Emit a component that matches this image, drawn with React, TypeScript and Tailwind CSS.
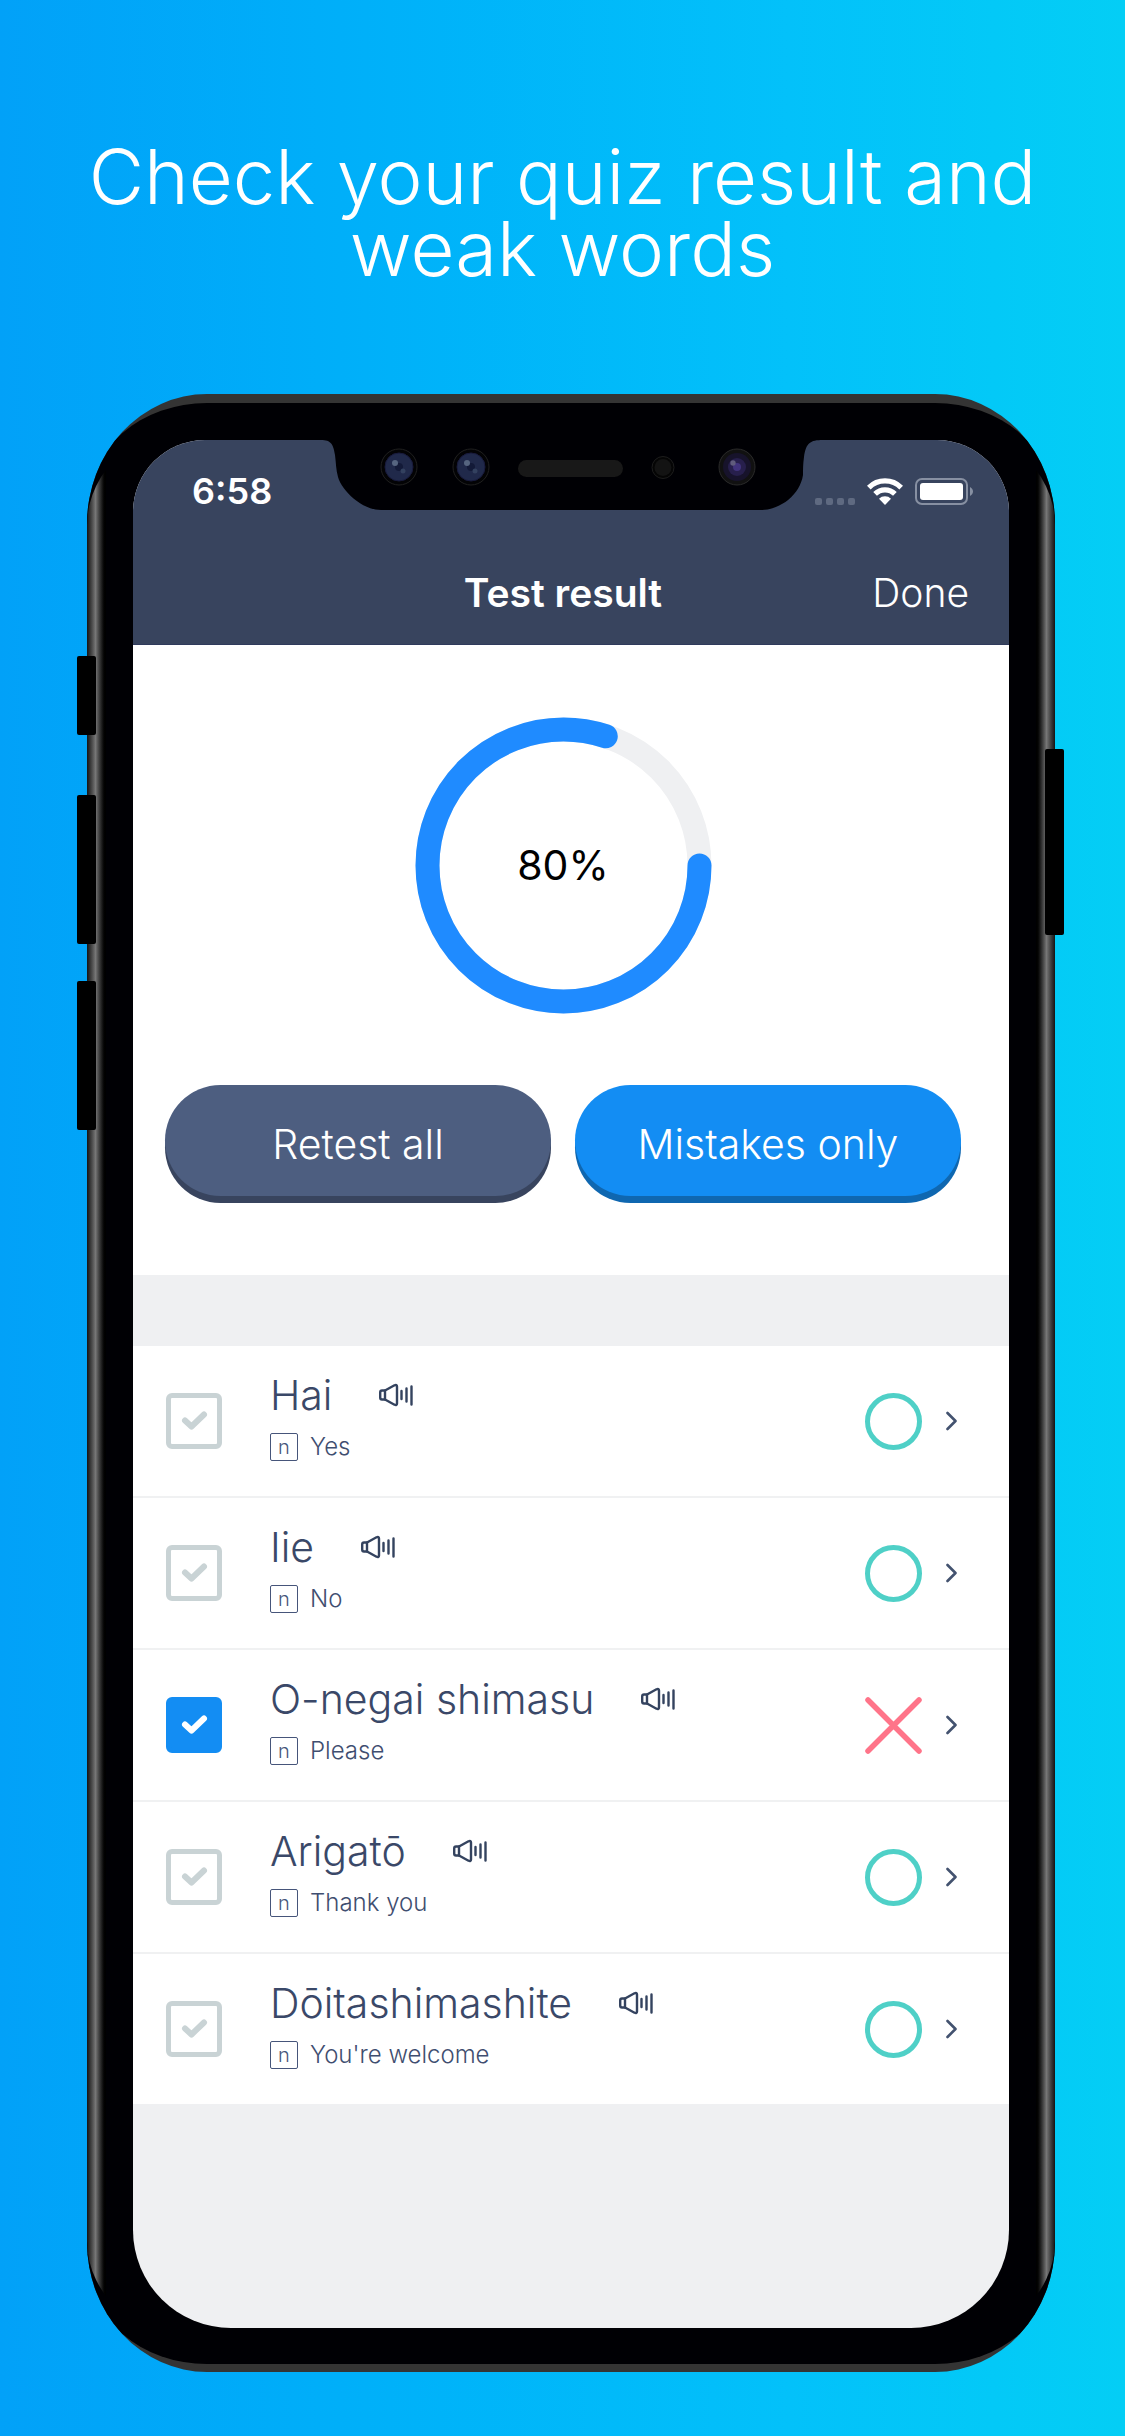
import { useState } from "react";

type Word = { name: string; meaning: string; correct: boolean };

const words: Word[] = [
  { name: "Hai", meaning: "Yes", correct: true },
  { name: "Iie", meaning: "No", correct: true },
  { name: "O-negai shimasu", meaning: "Please", correct: false },
  { name: "Arigatō", meaning: "Thank you", correct: true },
  { name: "Dōitashimashite", meaning: "You're welcome", correct: true },
];

function Notch() {
  return (
    <svg
      aria-hidden="true"
      viewBox="0 0 504 71"
      className="absolute -top-px left-1/2 h-[71px] w-[504px] -translate-x-1/2"
    >
      <path
        d="M0 0V1C11 1 14 3 16 16C17 24 17 31 19 38C23 52 43 71 62 71H442C461 71 481 56 484 36C484 30 484 25 485 18C487 4 491 1 504 1V0Z"
        fill="#000004"
      />
      {[80, 152].map((x) => (
        <g key={x}>
          <circle cx={x} cy="28" r="18" fill="#030305" stroke="#202020" />
          <circle cx={x} cy="28" r="14" fill="#20294a" stroke="#181a3c" />
          <circle cx={x} cy="28" r="4" fill="#131a38" />
          <circle cx={x - 4} cy="24" r="3" fill="#566580" />
          <circle cx={x + 4} cy="32" r="2.5" fill="#33415f" />
        </g>
      ))}
      <rect x="199" y="21" width="105" height="17" rx="8.5" fill="#181818" />
      <circle cx="344" cy="28.500" r="11" fill="#050505" stroke="#1d1d1d" />
      <circle cx="344" cy="28.500" r="8.500" fill="#131313" />
      <circle cx="418" cy="28" r="18" fill="#111" stroke="#2a2a2a" />
      <circle cx="418" cy="28" r="14" fill="#17132b" />
      <circle cx="418" cy="28" r="9" fill="#271f4c" />
      <circle cx="418" cy="28" r="4" fill="#41337c" />
      <circle cx="414" cy="24" r="2.700" fill="#605c7c" />
    </svg>
  );
}

function StatusIcons() {
  return (
    <div className="flex items-center gap-3" aria-hidden="true">
      <div className="flex gap-1 self-end">
        {[0, 1, 2, 3].map((i) => (
          <span key={i} className="size-[7px] rounded-[2px] bg-[#5f6a81]" />
        ))}
      </div>
      <svg viewBox="0 0 36 27" className="h-[27px] w-9">
        <g fill="none" stroke="#fff" strokeWidth="5.200">
          <path d="M1.800 9.600A22.800 22.800 0 0 1 34.200 9.600" />
          <path d="M8.100 15.900A14 14 0 0 1 27.900 15.900" />
        </g>
        <path d="M12 20.800A8.500 8.500 0 0 1 24 20.800L18 27Z" fill="#fff" />
      </svg>
      <svg viewBox="0 0 58 27" className="h-[27px] w-[58px]">
        <rect x="1" y="1" width="51" height="25" rx="6" fill="none" stroke="#8790a2" strokeWidth="2" />
        <rect x="5" y="5" width="43" height="17" rx="3" fill="#fff" />
        <path d="M55 9V18C59 16 59 11 55 9Z" fill="#8790a2" />
      </svg>
    </div>
  );
}

function ScoreRing({ percent }: { percent: number }) {
  const radius = 136;
  const length = 2 * Math.PI * radius;
  return (
    <div className="grid size-[297px] place-items-center">
      <svg viewBox="0 0 297 297" className="col-start-1 row-start-1 size-full" aria-hidden="true">
        <circle cx="148.500" cy="148.500" r={radius} fill="none" stroke="#eff0f2" strokeWidth="24" />
        <circle
          cx="148.500"
          cy="148.500"
          r={radius}
          fill="none"
          stroke="#1f8bff"
          strokeWidth="24"
          strokeLinecap="round"
          strokeDasharray={`${(length * percent) / 100} ${length}`}
        />
      </svg>
      <span className="col-start-1 row-start-1 text-[41px] text-black">{percent}%</span>
    </div>
  );
}

function SpeakerIcon() {
  return (
    <svg viewBox="0 0 34 24" className="h-6 w-[34px]" fill="none" stroke="#34435f" strokeWidth="2.400" strokeLinejoin="round" strokeLinecap="round" aria-hidden="true">
      <path d="M6 7.500L15.500 2.300Q18 1.500 18 3.500V20.500Q18 22.500 15.500 21.700L6 16.500" />
      <path d="M6 7.500H3Q1.200 7.500 1.200 9.500V14.500Q1.200 16.500 3 16.500H6Z" />
      <path d="M22.500 8V16M27.500 5.500V18.500M32.500 3.500V21.500" />
    </svg>
  );
}

function WordRow({ word }: { word: Word }) {
  const [checked, setChecked] = useState(!word.correct);
  return (
    <li className="flex items-center border-b-2 border-[#f0f1f2] bg-white pr-[52px] pl-[33px] last:border-b-0">
      <label className="relative size-14 shrink-0">
        <input
          type="checkbox"
          aria-label={`Select ${word.name}`}
          checked={checked}
          onChange={(e) => setChecked(e.target.checked)}
          className="block size-14 appearance-none rounded-md border-[5px] border-[#c9d3d5] bg-white checked:border-[#138df3] checked:bg-[#138df3]"
        />
        <svg
          viewBox="0 0 56 56"
          aria-hidden="true"
          className={checked ? "pointer-events-none absolute inset-0 text-white" : "pointer-events-none absolute inset-0 text-[#c9d3d5]"}
        >
          <path d="M19 27.500L25.500 33.500L38 21.500" fill="none" stroke="currentColor" strokeWidth="6" strokeLinecap="round" strokeLinejoin="round" />
        </svg>
      </label>
      <div className="ml-12 grow pt-[25px] pb-[35px]">
        <div className="flex items-center">
          <span className="text-[41px] leading-[48px] font-light text-[#3a4868]">{word.name}</span>
          <button type="button" aria-label={`Play ${word.name}`} className="ml-[47px]">
            <SpeakerIcon />
          </button>
        </div>
        <div className="mt-[14px] flex items-center gap-3">
          <span className="flex size-7 items-center justify-center rounded-[2px] border border-[#46557a] text-xl leading-none font-light text-[#46557a]">
            n
          </span>
          <span className="text-2xl leading-7 font-light text-[#3f4e70]">{word.meaning}</span>
        </div>
      </div>
      <svg viewBox="0 0 57 57" className="size-[57px] shrink-0" fill="none" strokeWidth="5" role="img" aria-label={word.correct ? "Correct" : "Wrong"}>
        {word.correct ? (
          <circle cx="28.500" cy="28.500" r="26" stroke="#4fd0c7" />
        ) : (
          <path d="M3 3L54 54M54 3L3 54" stroke="#ff7489" strokeWidth="5.500" strokeLinecap="round" />
        )}
      </svg>
      <button type="button" aria-label={`Open ${word.name}`} className="ml-6 shrink-0">
        <svg viewBox="0 0 11 20" className="h-5 w-[11px]" fill="none" stroke="#43526f" strokeWidth="2.600" strokeLinecap="round" strokeLinejoin="round" aria-hidden="true">
          <path d="M1.500 2L9.500 10L1.500 18" />
        </svg>
      </button>
    </li>
  );
}

function DeviceBody() {
  return (
    <div aria-hidden="true" className="absolute inset-0">
      <div className="absolute inset-0 overflow-hidden rounded-[120px/130px] bg-[#343434]">
        <div className="absolute inset-x-0 top-[9px] bottom-2 rounded-[120px/103px] bg-[#000004]" />
        <div className="absolute inset-x-0 top-[29px] bottom-[29px] overflow-hidden rounded-[120px/102px]">
          <div className="absolute inset-y-0 left-0 w-[19px] bg-linear-to-r from-[#151515] via-[#777777] via-45% to-black" />
          <div className="absolute inset-y-0 right-0 w-[19px] bg-linear-to-l from-[#151515] via-[#777777] via-45% to-black" />
        </div>
      </div>
      <div className="absolute top-[262px] -left-[10px] h-[79px] w-[19px] rounded-[2px] bg-black" />
      <div className="absolute top-[401px] -left-[10px] h-[149px] w-[19px] rounded-[2px] bg-black" />
      <div className="absolute top-[587px] -left-[10px] h-[149px] w-[19px] rounded-[2px] bg-black" />
      <div className="absolute top-[355px] -right-[9px] h-[186px] w-[19px] rounded-[2px] bg-black" />
    </div>
  );
}

export default function App() {
  return (
    <main className="min-h-screen bg-linear-to-r from-[#02a1f8] via-[#03c1fa] via-70% to-[#04cef5] pb-16 font-['Inter','Noto_Sans_CJK_JP',sans-serif]">
      <h1 className="px-10 pt-[140px] text-center text-[76px] leading-[72px] font-[340] text-white">
        Check your quiz result and weak words
      </h1>
      <div className="relative mt-[110px] mr-[70px] ml-[87px]">
        <DeviceBody />
        <div className="relative pt-[46px] pr-[46px] pb-11 pl-[46px]">
          <div className="relative overflow-hidden rounded-t-[72px] rounded-b-[98px] bg-[#eff0f2]">
            <header className="border-b border-[#2f3a5c] bg-[#38445e] text-white">
              <div className="flex h-[102px] items-center justify-between pr-9 pl-[59px]">
                <span className="text-4xl font-semibold">6:58</span>
                <StatusIcons />
              </div>
              <div className="grid h-[102px] grid-cols-[1fr_auto_1fr] items-center pr-10 pl-6">
                <h2 className="col-start-2 text-[39px] font-semibold">Test result</h2>
                <button type="button" className="justify-self-end text-[39px] font-[350]">
                  Done
                </button>
              </div>
            </header>
            <section className="flex flex-col items-center bg-white pt-[72px] pr-12 pb-[72px] pl-8">
              <ScoreRing percent={80} />
              <div className="mt-[71px] grid w-full grid-cols-2 gap-6 pb-[7px]">
                <button type="button" className="h-[111px] rounded-full bg-[#4d5e80] pt-2 text-[41px] font-light text-white shadow-[0_7px_0_#38445e]">
                  Retest all
                </button>
                <button type="button" className="h-[111px] rounded-full bg-[#138df3] pt-2 text-[41px] font-light text-white shadow-[0_7px_0_#0f67b0]">
                  Mistakes only
                </button>
              </div>
            </section>
            <ul className="mt-[71px] mb-56">
              {words.map((word) => (
                <WordRow key={word.name} word={word} />
              ))}
            </ul>
            <Notch />
          </div>
        </div>
      </div>
    </main>
  );
}
